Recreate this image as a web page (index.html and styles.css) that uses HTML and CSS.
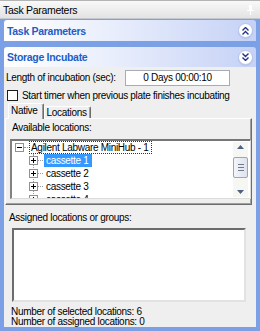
FILE: index.html
```html
<!DOCTYPE html>
<html lang="en">
<head>
  <meta charset="UTF-8">
  <title>Task Parameters</title>
  <link rel="stylesheet" href="styles.css">
</head>
<body>
  <div class="window">
    <div class="titlebar">
      <span class="title">Task Parameters</span>
      <svg class="pin" width="7" height="10" viewBox="0 0 7 10">
        <rect x="2" y="0" width="3" height="5" fill="#fff"/>
        <rect x="0" y="5" width="7" height="1" fill="#fff"/>
        <rect x="3" y="6" width="1" height="4" fill="#fff"/>
      </svg>
    </div>
    <div class="taskpane">
      <div class="group-head">
        <span>Task Parameters</span>
        <span class="chevron">
          <svg width="7" height="8" viewBox="0 0 7 8"><path d="M0.5 3.5L3.5 0.5L6.5 3.5M0.5 7.5L3.5 4.5L6.5 7.5" fill="none" stroke="#21348c" stroke-width="1.4"/></svg>
        </span>
      </div>
      <div class="group-head second">
        <span>Storage Incubate</span>
        <span class="chevron">
          <svg width="7" height="8" viewBox="0 0 7 8"><path d="M0.5 0.5L3.5 3.5L6.5 0.5M0.5 4.5L3.5 7.5L6.5 4.5" fill="none" stroke="#21348c" stroke-width="1.4"/></svg>
        </span>
      </div>
      <div class="group-body">
        <div class="field-row">
          <span class="field-label">Length of incubation (sec):</span>
          <div class="field">0 Days 00:00:10</div>
        </div>
        <div class="check-row">
          <span class="checkbox"></span>
          <span>Start timer when previous plate finishes incubating</span>
        </div>
        <div class="tabs">
          <span class="tab active">Native</span>
          <span class="tab">Locations</span>
        </div>
        <div class="tab-page">
          <div class="caption">Available locations:</div>
          <div class="tree">
            <div class="tree-content">
              <div class="node">
                <span class="exp"><svg width="9" height="9" viewBox="0 0 9 9"><rect x="0.5" y="0.5" width="8" height="8" fill="#fff" stroke="#919191"/><path d="M2 4.5H7" stroke="#000"/></svg></span>
                <span class="hline"></span>
                <span class="label focus">Agilent Labware MiniHub - 1</span>
              </div>
              <div class="children">
                <div class="node">
                  <span class="exp child"><svg width="9" height="9" viewBox="0 0 9 9"><rect x="0.5" y="0.5" width="8" height="8" fill="#fff" stroke="#919191"/><path d="M2 4.5H7M4.5 2V7" stroke="#000"/></svg></span>
                  <span class="hline"></span>
                  <span class="label selected">cassette 1</span>
                </div>
                <div class="node">
                  <span class="exp child"><svg width="9" height="9" viewBox="0 0 9 9"><rect x="0.5" y="0.5" width="8" height="8" fill="#fff" stroke="#919191"/><path d="M2 4.5H7M4.5 2V7" stroke="#000"/></svg></span>
                  <span class="hline"></span>
                  <span class="label">cassette 2</span>
                </div>
                <div class="node">
                  <span class="exp child"><svg width="9" height="9" viewBox="0 0 9 9"><rect x="0.5" y="0.5" width="8" height="8" fill="#fff" stroke="#919191"/><path d="M2 4.5H7M4.5 2V7" stroke="#000"/></svg></span>
                  <span class="hline"></span>
                  <span class="label">cassette 3</span>
                </div>
                <div class="node">
                  <span class="exp child"><svg width="9" height="9" viewBox="0 0 9 9"><rect x="0.5" y="0.5" width="8" height="8" fill="#fff" stroke="#919191"/><path d="M2 4.5H7M4.5 2V7" stroke="#000"/></svg></span>
                  <span class="hline"></span>
                  <span class="label">cassette 4</span>
                </div>
              </div>
            </div>
            <div class="vscroll">
              <div class="sb-btn"><svg width="7" height="4" viewBox="0 0 7 4"><path d="M0 4L3.5 0L7 4Z" fill="#4d6185"/></svg></div>
              <div class="sb-track">
                <div class="sb-thumb">
                  <span></span><span></span><span></span>
                </div>
              </div>
              <div class="sb-btn"><svg width="7" height="4" viewBox="0 0 7 4"><path d="M0 0L3.5 4L7 0Z" fill="#4d6185"/></svg></div>
            </div>
          </div>
        </div>
        <div class="caption assigned">Assigned locations or groups:</div>
        <div class="list-box"></div>
        <div class="status">
          <div>Number of selected locations: 6</div>
          <div>Number of assigned locations: 0</div>
        </div>
      </div>
    </div>
  </div>
</body>
</html>
```

FILE: styles.css
```css
body { margin: 0; font-family: "Liberation Sans", Arial, sans-serif; font-size: 10px; letter-spacing: -0.3px; color: #000; }
.window { width: 260px; height: 331px; background: #7ba0e5; display: flex; flex-direction: column; overflow: hidden; }

/* docked window caption */
.titlebar { height: 19px; box-sizing: border-box; border-top: 1px solid #b4b4b4; border-bottom: 1px solid #c4c8d0; background: linear-gradient(#f9f9f9, #e3e3e3); display: flex; align-items: center; justify-content: space-between; padding: 0 6px 0 3px; font-size: 10.5px; }
.pin { display: block; }

/* task pane groups */
.taskpane { flex: 1; display: flex; flex-direction: column; padding: 1px 4px 4px 4px; }
.group-head { height: 21px; box-sizing: border-box; border-radius: 3px 3px 0 0; background: linear-gradient(90deg, #ffffff 0%, #e8edfc 45%, #c5d2f6 100%); color: #215dc6; font-weight: bold; font-size: 10.5px; display: flex; align-items: center; justify-content: space-between; padding: 0 3px 0 3px; margin-bottom: 6px; }
.group-head.second { height: 20px; margin-bottom: 0; }
.chevron { width: 15px; height: 15px; box-sizing: border-box; border-radius: 50%; background: #fff; border: 1px solid #b5c3e8; display: flex; align-items: center; justify-content: center; box-shadow: 0 1px 1px #8ea3d855; }
.chevron svg { display: block; }

.group-body { flex: 1; background: #efefef; overflow: hidden; display: flex; flex-direction: column; }

.field-row { display: flex; align-items: center; height: 17px; margin-top: 2px; padding-left: 2px; }
.field-label { width: 119px; }
.field { width: 105px; height: 16px; box-sizing: border-box; border: 1px solid #a5acb5; background: #fff; text-align: center; line-height: 14px; }

.check-row { display: flex; align-items: center; height: 16px; margin-top: 1px; padding-left: 3px; }
.checkbox { width: 11px; height: 11px; box-sizing: border-box; border: 1px solid #1c1c1c; background: #fff; margin-right: 4px; }

/* tab control */
.tabs { display: flex; align-items: flex-end; height: 15px; padding-left: 4px; }
.tab { height: 12px; box-sizing: border-box; padding: 0 3px 0 2px; line-height: 11px; border-top: 1px solid #fff; border-left: 1px solid #fff; border-right: 1px solid #6d6d6d; box-shadow: inset -1px 0 #a0a0a0; border-radius: 2px 2px 0 0; background: #efefef; }
.tab.active { height: 16px; line-height: 14px; margin-bottom: -1px; padding: 0 5px 0 2px; position: relative; z-index: 1; }
.tab-page { height: 87px; box-sizing: border-box; margin: 0 4px 0 1px; border-top: 1px solid #fff; border-left: 1px solid #fff; border-right: 1px solid #6d6d6d; border-bottom: 1px solid #6d6d6d; box-shadow: inset -1px -1px #a0a0a0; }
.caption { height: 12px; line-height: 12px; }
.tab-page .caption { margin: 3px 0 0 6px; }

/* tree view */
.tree { display: flex; height: 60px; box-sizing: border-box; margin: 5px 0 0 4px; background: #fff; border-top: 2px solid #777; border-left: 2px solid #828282; border-right: 1px solid #dcdcdc; border-bottom: 1px solid #dcdcdc; }
.tree-content { flex: 1; overflow: hidden; }
.node { height: 13px; display: flex; align-items: center; white-space: nowrap; }
.exp { display: block; margin-left: 3px; height: 9px; }
.exp svg { display: block; }
.exp.child { margin-left: -5px; }
.hline { width: 4px; border-top: 1px dotted #9a9a9a; margin-right: 1px; }
.children .hline { width: 5px; }
.label { line-height: 11px; padding: 0 2px 0 1px; border: 1px solid transparent; }
.label.focus { border: 1px dotted #333; }
.label.selected { background: #3399ff; color: #fff; }
.children { margin-left: 21px; border-left: 1px dotted #9a9a9a; }

.vscroll { width: 15px; margin: 1px 2px 1px 0; display: flex; flex-direction: column; background: #f6f6f3; }
.sb-btn { height: 10px; display: flex; align-items: center; justify-content: center; }
.sb-btn svg { display: block; }
.sb-track { flex: 1; padding-top: 5px; }
.sb-thumb { height: 21px; box-sizing: border-box; border: 1px solid #9ba5b8; border-radius: 2px; background: linear-gradient(90deg, #f4f5f9, #dfe3ee); display: flex; flex-direction: column; align-items: center; justify-content: center; gap: 2px; }
.sb-thumb span { width: 6px; height: 1px; background: #6f7a90; }

.caption.assigned { margin: 7px 0 0 5px; }
.list-box { width: 234px; height: 74px; box-sizing: border-box; margin: 4px 0 0 8px; background: #fff; border-top: 2px solid #6c6c6c; border-left: 2px solid #6c6c6c; border-right: 2px solid #e2e2e2; border-bottom: 2px solid #e2e2e2; }
.status { margin-top: 5px; padding-left: 7px; line-height: 10px; }
```
